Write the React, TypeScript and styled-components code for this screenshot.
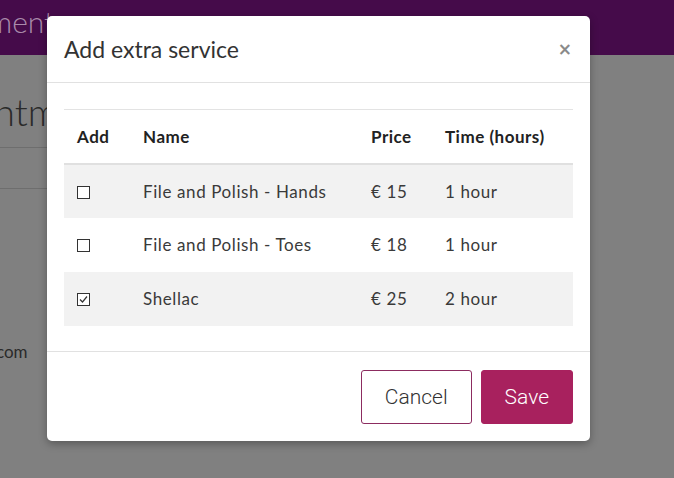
import React, { useState } from "react"
import styled, { createGlobalStyle, css } from "styled-components"

const GlobalStyle = createGlobalStyle`
	html, body {
		margin: 0;
		padding: 0;
		height: 100%;
		overflow: hidden;
	}
	body {
		font-family: Lato, "Open Sans", sans-serif;
		background: #808080;
	}
`

const Page = styled.div`
	position: relative;
	width: 674px;
	height: 478px;
	background: #808080;
	overflow: hidden;
`

const NavBar = styled.div`
	height: 55px;
	background: #450b4a;
	display: flex;
	align-items: flex-start;
	padding-top: 2px;
	box-sizing: border-box;
`

const NavTitle = styled.div`
	color: #a98bab;
	font-size: 30px;
	font-weight: 300;
	margin-left: -12px;
	line-height: 38px;
`

const Behind = styled.div`
	padding-top: 34px;
	color: #2a2a2a;
`

const BehindHeading = styled.div`
	font-size: 38px;
	font-weight: 300;
	margin-left: -6px;
	line-height: 44px;
	padding-bottom: 14px;
	border-bottom: 1px solid #6e6e6e;
	width: 60px;
`

const BehindLine = styled.div`
	height: 40px;
	border-bottom: 1px solid #6e6e6e;
	width: 60px;
`

const BehindText = styled.div`
	font-size: 17px;
	margin-top: 152px;
	margin-left: -4px;
`

const Modal = styled.div`
	position: absolute;
	left: 47px;
	top: 16px;
	width: 543px;
	height: 425px;
	background: #fff;
	border-radius: 5px;
	box-shadow: 0 3px 9px rgba(0, 0, 0, 0.3);
	display: flex;
	flex-direction: column;
`

const Header = styled.div`
	height: 67px;
	box-sizing: border-box;
	border-bottom: 1px solid #e1e1e1;
	display: flex;
	align-items: center;
	justify-content: space-between;
	padding: 0 18px 0 17px;
`

const Title = styled.h4`
	margin: 0;
	font-size: 23px;
	font-weight: 400;
	color: #333;
	letter-spacing: 0;
`

const Close = styled.button`
	border: none;
	background: none;
	padding: 0;
	font-size: 17px;
	font-weight: 700;
	color: #8a8a8a;
	line-height: 1;
	cursor: pointer;
	font-family: "DejaVu Sans", sans-serif;
`

const Body = styled.div`
	flex: 1;
	padding: 26px 17px 0;
	box-sizing: border-box;
	border-bottom: 1px solid #e1e1e1;
`

const Table = styled.table`
	width: 100%;
	border-collapse: collapse;
	border-top: 1px solid #e3e3e3;
	font-size: 17px;
	letter-spacing: 0.6px;
	color: #3a3a3a;
`

const Th = styled.th<{ w? }>`
	text-align: left;
	font-weight: 700;
	font-size: 17px;
	letter-spacing: 0.5px;
	color: #222;
	height: 54px;
	padding: 0 13px;
	border-bottom: 2px solid #e0e0e0;
	box-sizing: border-box;
	${({ w }) =>
		w &&
		css`
			width: ${w}px;
		`}
`

const Tr = styled.tr<{ striped? }>`
	${({ striped }) =>
		striped &&
		css`
			background: #f2f2f2;
		`}
	& + & td {
		border-top: 1px solid #e3e3e3;
	}
`

const Td = styled.td`
	height: 54px;
	padding: 0 13px;
	box-sizing: border-box;
	vertical-align: middle;
`

const Check = styled.span<{ checked? }>`
	display: inline-block;
	width: 11px;
	height: 11px;
	border: 1px solid #333;
	background: #fff;
	position: relative;
	vertical-align: middle;
	margin-top: -2px;

	svg {
		position: absolute;
		left: 1px;
		top: 1px;
	}
`

const Footer = styled.div`
	height: 89px;
	display: flex;
	justify-content: flex-end;
	align-items: center;
	gap: 9px;
	padding: 0 17px;
`

const Button = styled.button<{ primary? }>`
	height: 54px;
	border-radius: 3px;
	font-size: 21px;
	font-family: Roboto, sans-serif;
	font-weight: 300;
	padding: 0 23px;
	cursor: pointer;
	background: #fff;
	color: #333;
	border: 1px solid #8c2c60;

	${({ primary }) =>
		primary &&
		css`
			background: #a8215e;
			border-color: #a8215e;
			color: #fff;
		`}
`

const services = [
	{ name: "File and Polish - Hands", price: 15, time: "1 hour", checked: false },
	{ name: "File and Polish - Toes", price: 18, time: "1 hour", checked: false },
	{ name: "Shellac", price: 25, time: "2 hour", checked: true },
]

const App = () => {
	const [rows, setRows] = useState(services)

	const toggle = (i) => {
		setRows(rows.map((r, j) => (j === i ? { ...r, checked: !r.checked } : r)))
	}

	return (
		<Page>
			<GlobalStyle />
			<NavBar>
				<NavTitle>ment</NavTitle>
			</NavBar>
			<Behind>
				<BehindHeading>ntm</BehindHeading>
				<BehindLine />
				<BehindText>com</BehindText>
			</Behind>

			<Modal>
				<Header>
					<Title>Add extra service</Title>
					<Close>×</Close>
				</Header>
				<Body>
					<Table>
						<thead>
							<tr>
								<Th w={66}>Add</Th>
								<Th w={228}>Name</Th>
								<Th w={74}>Price</Th>
								<Th>Time (hours)</Th>
							</tr>
						</thead>
						<tbody>
							{rows.map((r, i) => (
								<Tr key={r.name} striped={i % 2 === 0}>
									<Td>
										<Check checked={r.checked} onClick={() => toggle(i)}>
											{r.checked && (
												<svg width="9" height="9" viewBox="0 0 9 9">
													<path d="M1 4.5 L3.5 7 L8 1.5" fill="none" stroke="#333" strokeWidth="1.2" />
												</svg>
											)}
										</Check>
									</Td>
									<Td>{r.name}</Td>
									<Td>€ {r.price}</Td>
									<Td>{r.time}</Td>
								</Tr>
							))}
						</tbody>
					</Table>
				</Body>
				<Footer>
					<Button>Cancel</Button>
					<Button primary>Save</Button>
				</Footer>
			</Modal>
		</Page>
	)
}

export default App
